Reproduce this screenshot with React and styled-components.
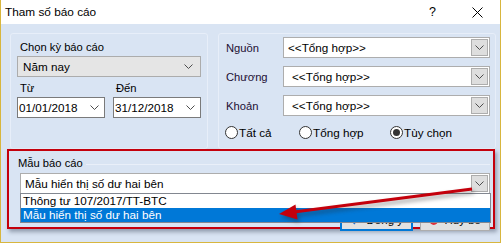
import React from "react";
import styled, { createGlobalStyle, css } from "styled-components";

const GlobalStyle = createGlobalStyle`
  html, body {
    margin: 0;
    padding: 0;
    background: #ffffff;
  }
  body {
    font-family: "Liberation Sans", Arial, sans-serif;
    font-size: 11px;
    color: #000;
  }
  * {
    box-sizing: border-box;
  }
`;

const Chevron = ({ color = "#4d4d4d" }) => (
  <svg width="9" height="5" viewBox="0 0 9 5">
    <polyline points="0.5,0.5 4.5,4.5 8.5,0.5" fill="none" stroke={color} strokeWidth="1" />
  </svg>
);

const ComboBox = ({ text, variant = "white", indent = 4, framedButton = false }) => (
  <Combo variant={variant}>
    <ComboText $indent={indent}>{text}</ComboText>
    {framedButton ? (
      <DropButton>
        <Chevron />
      </DropButton>
    ) : (
      <PlainDrop>
        <Chevron />
      </PlainDrop>
    )}
  </Combo>
);

const Radio = ({ label, checked, width }) => (
  <RadioItem style={width ? { width } : undefined}>
    <RadioCircle>{checked && <RadioDot />}</RadioCircle>
    <span>{label}</span>
  </RadioItem>
);

// Main Component
const ReportParamsDialog = () => {
  const sources = [
    { label: "Nguồn", indent: 4 },
    { label: "Chương", indent: 8 },
    { label: "Khoản", indent: 8 },
  ];

  return (
    <>
      <GlobalStyle />
      <Window>
        <TitleBar>
          <Title>Tham số báo cáo</Title>
          <TitleActions>
            <HelpMark>?</HelpMark>
            <svg width="11" height="11" viewBox="0 0 11 11">
              <path d="M0.5 0.5 L10.5 10.5 M10.5 0.5 L0.5 10.5" stroke="#000" strokeWidth="1" />
            </svg>
          </TitleActions>
        </TitleBar>

        <Body>
          <TopRow>
            <PeriodGroup>
              <FieldLabel>Chọn kỳ báo cáo</FieldLabel>
              <ComboBox text="Năm nay" variant="gray" indent={5} />
              <DateLabels>
                <FieldLabel>Từ</FieldLabel>
                <FieldLabel>Đến</FieldLabel>
              </DateLabels>
              <DateRow>
                <DateBox>
                  <DateText>01/01/2018</DateText>
                  <Chevron />
                </DateBox>
                <DateBox>
                  <DateText>31/12/2018</DateText>
                  <Chevron />
                </DateBox>
              </DateRow>
            </PeriodGroup>

            <FilterGroup>
              {sources.map((s) => (
                <FilterRow key={s.label}>
                  <FilterLabel>{s.label}</FilterLabel>
                  <ComboBox text="<<Tổng hợp>>" indent={s.indent} framedButton />
                </FilterRow>
              ))}
              <RadioRow>
                <Radio label="Tất cả" width={74} />
                <Radio label="Tổng hợp" width={91} />
                <Radio label="Tùy chọn" checked />
              </RadioRow>
            </FilterGroup>
          </TopRow>

          <Annotated>
            <LegendRow>
              <Legend>Mẫu báo cáo</Legend>
              <LegendLine />
            </LegendRow>
            <TemplateCombo>
              <ComboBox text="Mẫu hiển thị số dư hai bên" indent={4} framedButton />
              <DropList>
                <ListItem>Thông tư 107/2017/TT-BTC</ListItem>
                <ListItem selected>Mẫu hiển thị số dư hai bên</ListItem>
              </DropList>
            </TemplateCombo>
            <ButtonRow>
              <DialogButton primary>
                <svg width="12" height="12" viewBox="0 0 12 12">
                  <path d="M1.5 6 L5 9.5 L10.5 2" fill="none" stroke="#1f6fd0" strokeWidth="2.2" />
                </svg>
                Đồng ý
              </DialogButton>
              <DialogButton>
                <svg width="13" height="13" viewBox="0 0 13 13">
                  <circle cx="6.5" cy="6.5" r="6" fill="#e0303a" />
                  <path d="M4 4 L9 9 M9 4 L4 9" stroke="#fff" strokeWidth="1.6" />
                </svg>
                Hủy bỏ
              </DialogButton>
            </ButtonRow>
          </Annotated>
        </Body>

        <ArrowOverlay viewBox="0 0 501 243" width="501" height="243">
          <line x1="472" y1="189" x2="292" y2="212.3" stroke="#c4000c" strokeWidth="3" />
          <polygon points="279,214 295.5,204.5 297.5,219.5" fill="#c4000c" />
        </ArrowOverlay>
      </Window>
    </>
  );
};

// Styled Components
const Window = styled.div`
  position: relative;
  width: 501px;
  height: 243px;
  background: #d9e4f3;
  border-left: 1px solid #d8b63e;
  border-right: 1px solid #d8b63e;
  border-bottom: 1px solid #d8b63e;
  overflow: hidden;
`;

const TitleBar = styled.div`
  display: flex;
  align-items: center;
  justify-content: space-between;
  height: 24px;
  background: #ffffff;
  padding: 0 17px 0 4px;
`;

const Title = styled.div`
  font-size: 11.8px;
  color: #000;
`;

const TitleActions = styled.div`
  display: flex;
  align-items: center;
  gap: 36px;
`;

const HelpMark = styled.span`
  font-size: 12.5px;
`;

const Body = styled.div`
  padding: 9px 3px 0 9px;
`;

const TopRow = styled.div`
  display: flex;
  gap: 10px;
`;

const GroupBox = styled.div`
  height: 116px;
  border: 1px solid #e7eef9;
  border-radius: 3px;
`;

const PeriodGroup = styled(GroupBox)`
  width: 198px;
  padding: 6px 6px 0 6px;
  display: flex;
  flex-direction: column;
`;

const FieldLabel = styled.div`
  height: 14px;
  line-height: 14px;
  padding-left: 3px;
  margin-bottom: 2px;
  font-size: 11.2px;
`;

const DateLabels = styled.div`
  display: grid;
  grid-template-columns: 96px 88px;
  margin-top: 4px;
`;

const DateRow = styled.div`
  display: flex;
  gap: 8px;
`;

const DateBox = styled.div`
  width: 88px;
  height: 21px;
  background: #fff;
  border: 1px solid #7a7a7a;
  display: flex;
  align-items: center;
  justify-content: space-between;
  padding: 0 5px 0 1px;
`;

const DateText = styled.span`
  font-size: 11.7px;
`;

const FilterGroup = styled(GroupBox)`
  width: 278px;
  padding: 3px 5px 0 7px;
  display: flex;
  flex-direction: column;
  gap: 8px;
`;

const FilterRow = styled.div`
  display: grid;
  grid-template-columns: 57px 207px;
  align-items: center;
`;

const FilterLabel = styled.span`
  font-size: 11.2px;
  color: #1d0f33;
`;

const Combo = styled.div`
  position: relative;
  height: 21px;
  display: flex;
  align-items: center;
  justify-content: space-between;
  border: 1px solid #adadad;
  ${(p) =>
    p.variant === "gray"
      ? css`
          background: #e5e5e5;
          border-color: #acacac;
        `
      : css`
          background: #ffffff;
        `}
`;

const ComboText = styled.span`
  padding-left: ${(p) => p.$indent}px;
  font-size: 11.7px;
  white-space: nowrap;
`;

const DropButton = styled.div`
  width: 17px;
  height: 17px;
  margin-right: 1px;
  display: flex;
  align-items: center;
  justify-content: center;
  background: #dedede;
  border: 1px solid #adadad;
`;

const PlainDrop = styled.div`
  display: flex;
  align-items: center;
  padding-right: 7px;
`;

const RadioRow = styled.div`
  display: flex;
  align-items: center;
  margin: 1px 0 0 -1px;
  height: 14px;
`;

const RadioItem = styled.div`
  display: flex;
  align-items: center;
  gap: 1px;
  font-size: 11.7px;
`;

const RadioCircle = styled.span`
  width: 13px;
  height: 13px;
  border-radius: 50%;
  border: 1px solid #333;
  background: #fff;
  display: flex;
  align-items: center;
  justify-content: center;
`;

const RadioDot = styled.span`
  width: 7px;
  height: 7px;
  border-radius: 50%;
  background: #333;
`;

const Annotated = styled.div`
  position: relative;
  margin-left: -3px;
  width: 488px;
  height: 80px;
  border: 2px solid #c4000c;
  box-shadow: 2px 3px 4px rgba(60, 70, 90, 0.45);
  padding: 5px 3px 0 11px;
`;

const LegendRow = styled.div`
  display: flex;
  align-items: center;
  gap: 3px;
  margin-left: -2px;
  height: 14px;
`;

const Legend = styled.span`
  font-size: 11.2px;
  white-space: nowrap;
`;

const LegendLine = styled.div`
  flex: 1;
  height: 1px;
  background: #e9eff9;
  margin-top: 2px;
`;

const TemplateCombo = styled.div`
  position: relative;
  width: 470px;
  margin-top: 3px;
  z-index: 2;
`;

const DropList = styled.div`
  position: absolute;
  left: 0;
  top: 20px;
  width: 471px;
  height: 30px;
  background: #fff;
  border: 1px solid #828790;
`;

const ListItem = styled.div`
  height: 14px;
  line-height: 14px;
  padding-left: 2px;
  font-size: 11.7px;
  white-space: nowrap;
  ${(p) =>
    p.selected &&
    css`
      background: #0078d7;
      color: #fff;
    `}
`;

const ButtonRow = styled.div`
  position: relative;
  z-index: 1;
  display: flex;
  justify-content: flex-end;
  gap: 7px;
  margin-top: 15px;
`;

const DialogButton = styled.div`
  display: flex;
  align-items: center;
  gap: 6px;
  height: 22px;
  padding: 0 8px;
  font-size: 11.5px;
  white-space: nowrap;
  background: #e1e1e1;
  ${(p) =>
    p.primary
      ? css`
          width: 73px;
          border: 2px solid #0078d7;
        `
      : css`
          width: 70px;
          border: 1px solid #adadad;
        `}
`;

const ArrowOverlay = styled.svg`
  position: absolute;
  left: -1px;
  top: 0;
  pointer-events: none;
  z-index: 5;
  filter: drop-shadow(2px 3px 2px rgba(40, 40, 40, 0.45));
`;

export default ReportParamsDialog;
